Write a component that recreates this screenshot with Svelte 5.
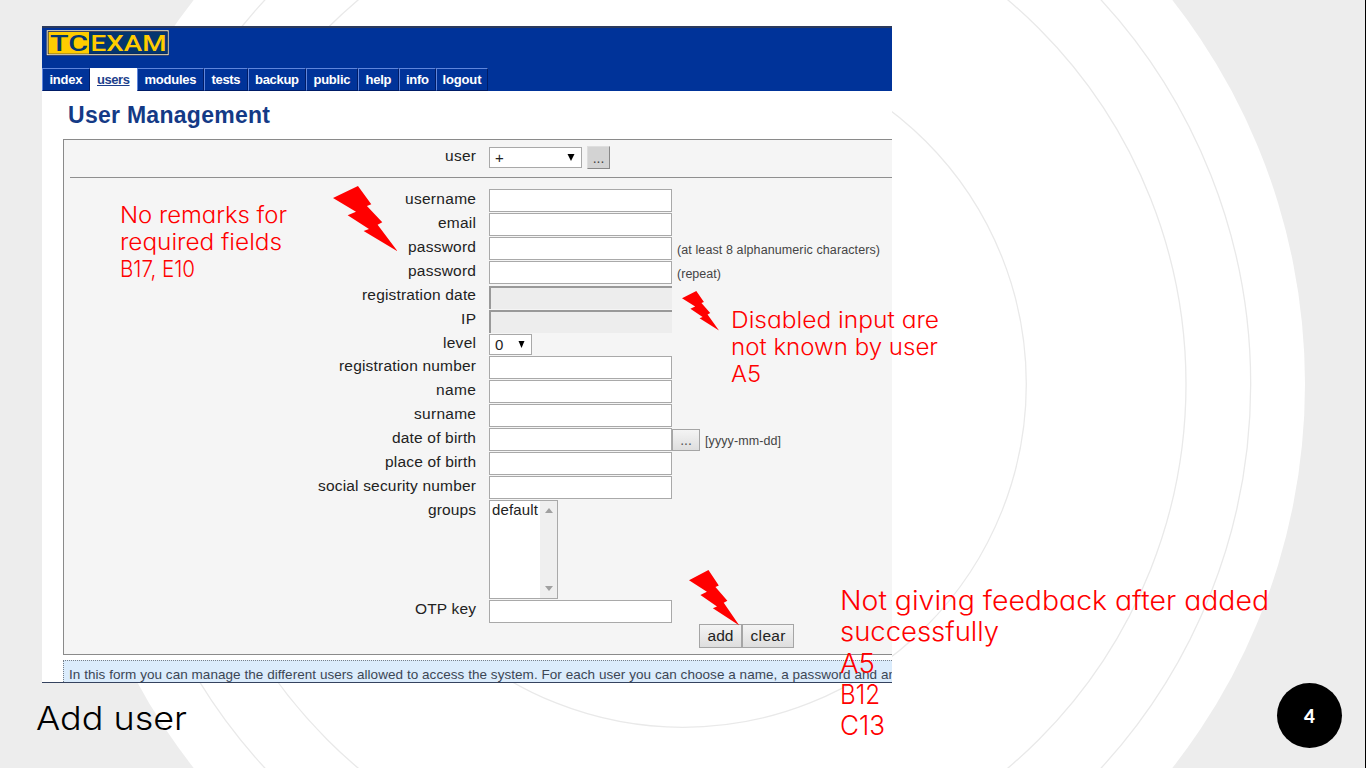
<script>
  const tabs = [
    { label: 'index', box: 48, text: 33 },
    { label: 'users', box: 47, text: 33, active: true },
    { label: 'modules', box: 67, text: 52 },
    { label: 'tests', box: 44, text: 29 },
    { label: 'backup', box: 58, text: 44 },
    { label: 'public', box: 52, text: 37 },
    { label: 'help', box: 41, text: 26 },
    { label: 'info', box: 37, text: 23 },
    { label: 'logout', box: 52, text: 39 }
  ];

  const rows = [
    { label: 'username', width: 71, kind: 'input' },
    { label: 'email', width: 38, kind: 'input' },
    { label: 'password', width: 68, kind: 'input', hint: '(at least 8 alphanumeric characters)', hintWidth: 203 },
    { label: 'password', width: 68, kind: 'input', hint: '(repeat)', hintWidth: 44 },
    { label: 'registration date', width: 114, kind: 'disabled' },
    { label: 'IP', width: 15, kind: 'disabled' },
    { label: 'level', width: 33, kind: 'level' },
    { label: 'registration number', width: 137, kind: 'input' },
    { label: 'name', width: 40, kind: 'input' },
    { label: 'surname', width: 62, kind: 'input' },
    { label: 'date of birth', width: 84, kind: 'input', picker: true, hint: '[yyyy-mm-dd]', hintWidth: 76 },
    { label: 'place of birth', width: 91, kind: 'input' },
    { label: 'social security number', width: 158, kind: 'input' },
    { label: 'groups', width: 48, kind: 'groups' },
    { label: 'OTP key', width: 61, kind: 'input last' }
  ];

  const notes = [
    { x: 120, y: 201, size: 22.5, line: 27, lines: [['No remarks for', 167], ['required fields', 162], ['B17, E10', 75]] },
    { x: 731, y: 306, size: 22.5, line: 27, lines: [['Disabled input are', 208], ['not known by user', 207], ['A5', 30]] },
    { x: 840, y: 585, size: 26.5, line: 31.25, lines: [['Not giving feedback after added', 429], ['successfully', 159], ['A5', 35], ['B12', 40], ['C13', 45]] }
  ];

  const bolts = [
    { x: 332.7, y: 186, w: 64.6, h: 65.3 },
    { x: 682, y: 291, w: 37, h: 39.5 },
    { x: 688.5, y: 570, w: 50.3, h: 55.5 }
  ];

  // Spreads the letters so that a run of text takes the given width.
  function fit(node, width) {
    const natural = node.getBoundingClientRect().width;
    const gap = (width - natural) / Math.max(1, node.textContent.length - 1);
    node.style.letterSpacing = `${gap}px`;
    node.style.marginRight = `${-gap}px`;
  }

  // Widens the letters themselves to take the given width.
  function widen(node, width) {
    const natural = node.getBoundingClientRect().width;
    node.style.transformOrigin = '0 50%';
    node.style.transform = `scaleX(${width / natural})`;
  }
</script>

<div class="slide">
  <svg class="rings" viewBox="0 0 1366 768">
    <circle cx="683" cy="384" r="622" fill="#fff" />
    <g fill="none" stroke="#e9e9e9" stroke-width="1.3">
      <circle cx="683" cy="384" r="567.7" />
      <circle cx="683" cy="384" r="503" />
      <circle cx="683" cy="384" r="343.3" />
    </g>
  </svg>

  <main class="shot">
    <header>
      <svg class="logo" width="124" height="28" viewBox="0 0 124 28">
        <rect x="0.5" y="1.2" width="122.5" height="25.6" fill="#111c4a" />
        <rect x="1.2" y="1.7" width="121" height="24" fill="none" stroke="#f4e9c0" stroke-width="1" />
        <rect x="2.5" y="3" width="40.5" height="21.7" fill="#fc0" />
        <rect x="43" y="3" width="78.5" height="21.7" fill="#04366f" />
        <g font-family="Roboto, sans-serif" font-weight="500" font-size="22.5">
          <text x="4" y="21.8" fill="#04366f" textLength="38" lengthAdjust="spacingAndGlyphs">TC</text>
          <text x="44.5" y="21.8" fill="#fc0" textLength="76" lengthAdjust="spacingAndGlyphs">EXAM</text>
        </g>
      </svg>
      <nav>
        {#each tabs as tab}
          <a class:active={tab.active} style="width: {tab.box}px"><span use:fit={tab.text}>{tab.label}</span></a>
        {/each}
      </nav>
    </header>

    <h1><span use:fit={202}>User Management</span></h1>

    <form>
      <div class="row top">
        <label><span use:fit={31}>user</span></label>
        <div class="select user"><span>+</span><svg width="8" height="7"><path d="M0.5 0h7L4 7z" /></svg></div>
        <div class="more">...</div>
      </div>
      <hr />
      <div class="rows">
        {#each rows as row}
          <div class="row {row.kind}">
            <label><span use:fit={row.width}>{row.label}</span></label>
            {#if row.kind === 'level'}
              <div class="select"><span>0</span><svg width="7" height="7"><path d="M0.5 0h6L3.5 7z" /></svg></div>
            {:else if row.kind === 'groups'}
              <div class="list">
                <span use:fit={46}>default</span>
                <div class="scroll">
                  <svg width="8" height="5"><path d="M0 5h8L4 0z" /></svg>
                  <svg width="8" height="5"><path d="M0 0h8L4 5z" /></svg>
                </div>
              </div>
            {:else}
              <div class="field"></div>
            {/if}
            {#if row.picker}<div class="btn picker">...</div>{/if}
            {#if row.hint}<span class="hint"><span use:fit={row.hintWidth}>{row.hint}</span></span>{/if}
          </div>
        {/each}
      </div>
      <div class="actions">
        <div class="btn add"><span use:fit={26}>add</span></div>
        <div class="btn clear"><span use:fit={35}>clear</span></div>
      </div>
    </form>

    <p class="info"><span use:fit={827}>In this form you can manage the different users allowed to access the system. For each user you can choose a name, a password and an</span></p>
  </main>

  <footer>
    <h2><span use:widen={151}>Add user</span></h2>
    <div class="page">4</div>
  </footer>

  {#each bolts as b}
    <svg class="bolt" style="left: {b.x}px; top: {b.y}px" width={b.w} height={b.h} viewBox="698 18 194 196" preserveAspectRatio="none">
      <path d="M773 18 813 73 800 78 846 127 832 134 892 214 790 153 806 147 742 106 767 95 698 54z" fill="#f00" />
    </svg>
  {/each}

  {#each notes as note}
    <div class="note" style="left: {note.x}px; top: {note.y}px; font-size: {note.size}px; line-height: {note.line}px">
      {#each note.lines as [text, width]}
        <div><span use:widen={width}>{text}</span></div>
      {/each}
    </div>
  {/each}
</div>

<style>
  :global(body) { margin: 0; }
  .slide {
    position: relative;
    box-sizing: border-box;
    width: 1366px;
    height: 768px;
    padding-top: 26px;
    overflow: hidden;
    background: #ededed;
    border-right: 1px solid #000;
    font-family: "Liberation Sans", Arial, sans-serif;
  }
  span { display: inline-block; white-space: pre; }
  .rings { position: absolute; left: 0; top: 0; width: 1366px; height: 768px; }

  .shot {
    position: relative;
    box-sizing: border-box;
    width: 850px;
    height: 657px;
    margin-left: 42px;
    overflow: hidden;
    background: #fff;
    border-bottom: 1px solid #35435f;
  }
  header {
    display: flex;
    flex-direction: column;
    justify-content: space-between;
    box-sizing: border-box;
    height: 65px;
    padding-top: 1px;
    background: #039;
    border-top: 2px solid #2b3a5c;
  }
  .logo { display: block; margin-left: 4px; }
  nav { display: flex; }
  nav a {
    box-sizing: border-box;
    height: 23px;
    border: 1px solid #001c66;
    border-top-color: #5f86dc;
    border-left-color: #5f86dc;
    color: #fff;
    font: bold 13px/22px "Liberation Sans", Arial, sans-serif;
    text-align: center;
  }
  nav a.active { background: #fff; border-color: #fff; color: #1c3f8c; }
  nav a.active span { text-decoration: underline; }

  h1 {
    height: 48px;
    margin: 0 0 0 26px;
    color: #143a86;
    font: bold 23px/48px "Liberation Sans", Arial, sans-serif;
  }

  form {
    box-sizing: border-box;
    width: 850px;
    height: 516px;
    margin-left: 21px;
    border: 1px solid #8a8a8a;
    background: #f5f5f5;
  }
  .row { display: flex; height: 24px; }
  label {
    flex: none;
    width: 412px;
    margin-right: 13px;
    color: #222;
    font-size: 15.5px;
    line-height: 20px;
    text-align: right;
  }
  .row.top { height: 31px; padding-top: 6px; }
  .last label { line-height: 18px; }
  hr { height: 1px; margin: 0 0 0 6px; border: 0; background: #8f8f8f; }
  .rows { padding-top: 11px; }
  .field {
    flex: none;
    box-sizing: border-box;
    width: 183px;
    height: 23px;
    background: #fff;
    border: 1px solid #a9a9a9;
  }
  .disabled .field {
    margin-top: 1px;
    background: #ededed;
    border: 2px solid #999;
    border-right: 0;
    border-bottom: 0;
  }
  .row.level { height: 23px; }
  .row.groups { height: 100px; }
  .select {
    display: flex;
    align-items: center;
    justify-content: space-between;
    box-sizing: border-box;
    width: 43px;
    height: 21px;
    margin-top: 1px;
    padding: 0 6px 0 5px;
    background: #fff;
    border: 1px solid #a9a9a9;
    color: #222;
    font-size: 15px;
  }
  .select.user { width: 93px; margin: 1px 5px 0 0; }
  .more {
    box-sizing: border-box;
    width: 23px;
    height: 23px;
    background: #d3d3d3;
    border: 1px solid #dedede;
    border-right-color: #888;
    border-bottom-color: #888;
    color: #444;
    font-size: 14px;
    line-height: 23px;
    text-align: center;
  }
  .list {
    display: flex;
    justify-content: space-between;
    box-sizing: border-box;
    width: 69px;
    height: 99px;
    padding-left: 2px;
    background: #fff;
    border: 1px solid #a9a9a9;
    color: #222;
    font-size: 15px;
    line-height: 18px;
  }
  .scroll {
    display: flex;
    flex-direction: column;
    align-items: center;
    justify-content: space-between;
    box-sizing: border-box;
    width: 17px;
    padding: 7px 0;
    background: #efefef;
  }
  .scroll svg { fill: #a0a0a0; }
  .hint { margin-left: 5px; color: #444; font-size: 12.5px; line-height: 26px; }
  .btn {
    box-sizing: border-box;
    background: linear-gradient(#f4f4f4, #dedede);
    border: 1px solid #a5a5a5;
    color: #222;
    font-size: 15.5px;
    text-align: center;
  }
  .picker { width: 28px; height: 22px; margin-top: 1px; color: #555; font-size: 14px; line-height: 21px; }
  .actions { display: flex; margin: 0 0 0 635px; }
  .actions .btn { height: 24px; line-height: 22px; }
  .actions .add { width: 43px; }
  .actions .clear { width: 52px; }

  .info {
    width: 850px;
    height: 30px;
    margin: 5px 0 0 21px;
    padding-left: 5px;
    background: #dbecfc;
    border: 1px dotted #777f88;
    color: #3c4654;
    font-size: 13.5px;
    line-height: 27px;
  }

  footer { position: relative; display: flex; justify-content: space-between; height: 85px; padding: 0 23px 0 36px; }
  h2 { margin: 0; font: 300 33px/71px Inter, sans-serif; font-feature-settings: "cv11"; }
  .page {
    width: 65px;
    height: 65px;
    border-radius: 50%;
    background: #000;
    color: #fff;
    font: 900 19px/65px Lato, sans-serif;
    text-align: center;
  }
  .bolt { position: absolute; }
  .note {
    position: absolute;
    color: #f00;
    font-family: Inter, sans-serif;
    font-weight: 300;
    font-feature-settings: "cv11";
  }
</style>
